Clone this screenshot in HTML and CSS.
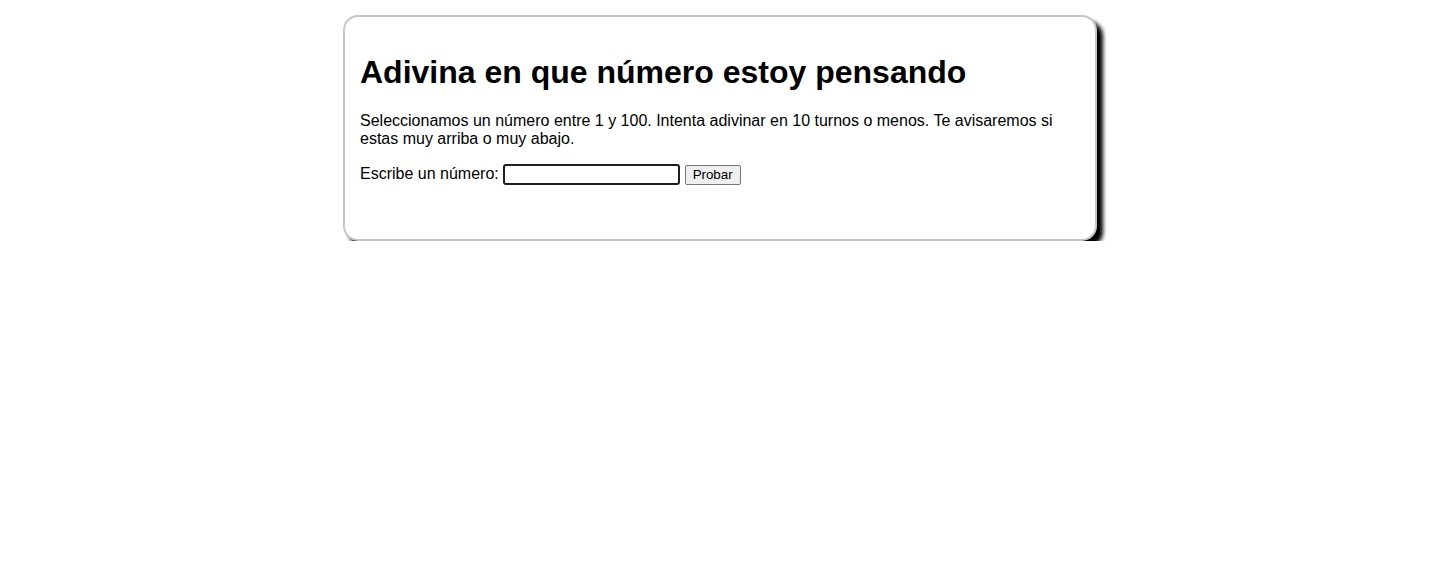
FILE: index.html
```html
<!DOCTYPE html>
<html lang="es">
<head>
<meta charset="utf-8">
<title>Adivina el número</title>
<link rel="stylesheet" href="styles.css">
</head>
<body>
<main class="card">
  <h1 class="title">Adivina en que número estoy pensando</h1>
  <p class="intro">Seleccionamos un número entre 1 y 100. Intenta adivinar en 10 turnos o menos. Te avisaremos si estas muy arriba o muy abajo.</p>
  <div class="form-row">
    <label class="label" for="guessField">Escribe un número: </label><input class="guess-field" type="text" id="guessField"> <button class="guess-submit" type="button">Probar</button>
  </div>
  <div class="results"></div>
</main>
</body>
</html>
```

FILE: styles.css
```css
html, body {
  margin: 0;
  padding: 0;
  background: #ffffff;
}

body {
  font-family: "Liberation Sans", Arial, sans-serif;
  font-size: 16px;
  color: #000;
}

.card {
  box-sizing: content-box;
  width: 720px;
  margin: 15px auto 0;
  padding: 10px 15px 54px;
  border: 2px solid #c6c6c6;
  border-radius: 15px;
  box-shadow: 6px 6px 4px #000;
  background: #fff;
}

.title {
  font-size: 32px;
  font-weight: bold;
  margin: 27px 0 21px;
}

.intro {
  margin: 0 0 16px;
  line-height: 18px;
}

.form-row {
  line-height: 18px;
  margin: 0;
}

.label {
  font-size: 16px;
}

.guess-field {
  box-sizing: border-box;
  width: 177px;
  height: 21px;
  margin: 0;
  padding: 1px 2px;
  border: 2px solid #1f1f1f;
  border-radius: 3px;
  background: #fff;
  font-family: "Liberation Sans", Arial, sans-serif;
  font-size: 13.33px;
  vertical-align: baseline;
  outline: none;
}

.guess-submit {
  box-sizing: border-box;
  width: 56px;
  height: 20px;
  margin: 0;
  padding: 1px 6px;
  border: 1px solid #767676;
  border-radius: 2px;
  background: #efefef;
  color: #000;
  font-family: "Liberation Sans", Arial, sans-serif;
  font-size: 13.33px;
  vertical-align: baseline;
}

.results {
  height: 0;
}
```
